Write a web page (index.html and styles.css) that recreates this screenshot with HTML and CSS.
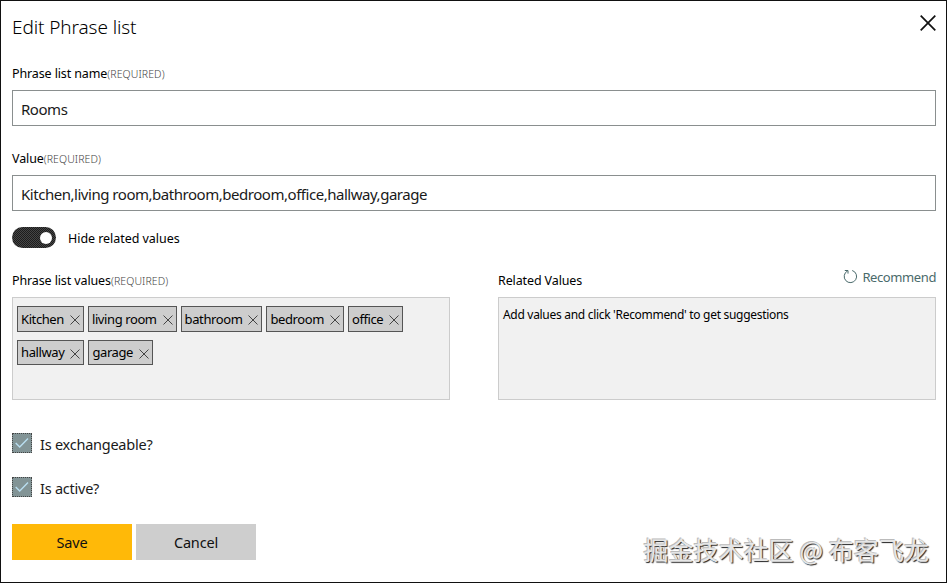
FILE: index.html
```html
<!DOCTYPE html>
<html lang="en">
    <head>
        <meta charset="UTF-8">
        <meta name="viewport" content="width=device-width, initial-scale=1.0">
        <title>Edit Phrase list</title>
        <link rel="stylesheet" href="styles.css">
    </head>
    <body>
        <svg class="sprite">
            <symbol id="cross" viewBox="0 0 10 10">
                <path d="M0.5 0.5 L9.5 9.5 M9.5 0.5 L0.5 9.5"/>
            </symbol>
        </svg>
        <form class="dialog">
            <div class="header">
                <h1 class="title">Edit Phrase list</h1>
                <svg class="close" width="16" height="16" viewBox="0 0 16 16">
                    <path d="M0.7 0.7 L15.3 15.3 M15.3 0.7 L0.7 15.3"/>
                </svg>
            </div>

            <label class="label nameLabel">Phrase list name<span class="required">(REQUIRED)</span></label>
            <input class="textBox" type="text" value="Rooms">

            <label class="label valueLabel">Value<span class="required">(REQUIRED)</span></label>
            <input class="textBox" type="text" value="Kitchen,living room,bathroom,bedroom,office,hallway,garage">

            <div class="toggleRow">
                <span class="toggle"><span class="knob"></span></span>
                <span class="label toggleLabel">Hide related values</span>
            </div>

            <div class="columns">
                <div class="column">
                    <div class="columnHead">
                        <label class="label">Phrase list values<span class="required">(REQUIRED)</span></label>
                    </div>
                    <div class="box chips">
                        <span class="chip">Kitchen<svg class="remove"><use href="#cross"/></svg></span>
                        <span class="chip">living room<svg class="remove"><use href="#cross"/></svg></span>
                        <span class="chip">bathroom<svg class="remove"><use href="#cross"/></svg></span>
                        <span class="chip">bedroom<svg class="remove"><use href="#cross"/></svg></span>
                        <span class="chip">office<svg class="remove"><use href="#cross"/></svg></span>
                        <span class="chip">hallway<svg class="remove"><use href="#cross"/></svg></span>
                        <span class="chip">garage<svg class="remove"><use href="#cross"/></svg></span>
                    </div>
                </div>
                <div class="column">
                    <div class="columnHead">
                        <label class="label">Related Values</label>
                        <a class="recommend">
                            <svg width="15" height="15" viewBox="0 0 15 15">
                                <path d="M9.2 1.5 A6.2 6.2 0 1 1 4.6 1.9 M1.8 1.5 H5 V4.6"/>
                            </svg>
                            <span>Recommend</span>
                        </a>
                    </div>
                    <div class="box hint">Add values and click 'Recommend' to get suggestions</div>
                </div>
            </div>

            <div class="checkRow">
                <span class="check"><svg width="14" height="12" viewBox="0 0 14 12"><path d="M0.7 6 L4.7 10 L13 1.5"/></svg></span>
                <span>Is exchangeable?</span>
            </div>
            <div class="checkRow">
                <span class="check"><svg width="14" height="12" viewBox="0 0 14 12"><path d="M0.7 6 L4.7 10 L13 1.5"/></svg></span>
                <span>Is active?</span>
            </div>

            <div class="buttons">
                <button class="btn save" type="button">Save</button>
                <button class="btn" type="button">Cancel</button>
            </div>
            <div class="watermark">掘金技术社区 @ 布客飞龙</div>
        </form>
    </body>
</html>
```
FILE: styles.css
```css
* {
    box-sizing: border-box;
}
body {
    margin: 0;
    font-family: "Noto Sans", "Open Sans", sans-serif;
    font-size: 14px;
    color: #1a1a1a;
    background-color: #fff;
}
svg {
    fill: none;
    flex: none;
}
.sprite {
    display: none;
}
.dialog {
    position: relative;
    width: 947px;
    height: 583px;
    border: 1px solid #111;
    padding: 0 10px 0 11px;
    overflow: hidden;
}
.header {
    display: flex;
    justify-content: space-between;
    height: 63px;
}
.title {
    margin: 13px 0 0;
    font-size: 19px;
    line-height: 26px;
    font-weight: 300;
    letter-spacing: -0.1px;
    color: #000;
}
.close {
    margin: 14px 0 0;
    stroke: #111;
    stroke-width: 1.7;
}
.label {
    display: block;
    font-size: 12.5px;
    line-height: 20px;
    letter-spacing: -0.12px;
    white-space: nowrap;
    color: #000;
}
.required {
    font-size: 10.5px;
    font-weight: 300;
    letter-spacing: 0.1px;
    color: #444;
}
.nameLabel {
    height: 26px;
}
.valueLabel {
    margin-top: 23px;
    height: 26px;
}
.textBox {
    display: block;
    width: 100%;
    height: 36px;
    border: 1px solid #8a8f8f;
    padding: 2px 8px 0;
    font-family: inherit;
    font-size: 15px;
    letter-spacing: -0.47px;
    color: #1a1a1a;
    background-color: #fff;
}
.toggleRow {
    display: flex;
    gap: 12px;
    margin-top: 16px;
    height: 21px;
}
.toggle {
    display: flex;
    justify-content: flex-end;
    align-items: center;
    width: 44px;
    height: 21px;
    padding-right: 4px;
    border-radius: 11px;
    background: repeating-conic-gradient(#1c1c1c 0 25%, #454545 0 50%) 0 0 / 2px 2px;
}
.knob {
    width: 12px;
    height: 12px;
    border-radius: 50%;
    background-color: #fff;
}
.toggleLabel {
    line-height: 24px;
    letter-spacing: -0.05px;
}
.columns {
    display: grid;
    grid-template-columns: 438px 438px;
    gap: 48px;
    margin-top: 17px;
}
.columnHead {
    display: flex;
    justify-content: space-between;
    height: 32px;
    padding-top: 6px;
}
.box {
    height: 103px;
    border: 1px solid #ccc;
    background-color: #f1f1f1;
}
.chips {
    display: flex;
    flex-wrap: wrap;
    align-content: flex-start;
    gap: 8px 4px;
    padding: 8px 4px;
}
.chip {
    display: flex;
    align-items: center;
    height: 25.5px;
    border: 1px solid #555;
    padding: 0 3px;
    font-size: 13px;
    letter-spacing: -0.4px;
    color: #000;
    background-color: #cdcdcd;
}
.remove {
    width: 10px;
    height: 10px;
    margin: 3px 0 0 6px;
    stroke: #444;
}
.hint {
    padding: 7px 4px;
    font-size: 12px;
    line-height: 20px;
    letter-spacing: -0.3px;
    color: #000;
}
.recommend {
    display: flex;
    gap: 4px;
    margin-top: -4px;
    font-size: 13px;
    line-height: 21px;
    letter-spacing: -0.4px;
    color: #4a6a6b;
}
.recommend svg {
    margin-top: 2px;
    stroke: #4a6a6b;
}
.checkRow {
    display: flex;
    gap: 8px;
    height: 20px;
    margin-top: 24px;
    font-size: 14.5px;
    line-height: 23px;
    letter-spacing: -0.24px;
}
.columns + .checkRow {
    margin-top: 33px;
}
.check {
    display: flex;
    align-items: center;
    justify-content: center;
    width: 20px;
    height: 20px;
    border: 1px dotted #444;
    background-color: #829496;
}
.check svg {
    stroke: #b9def0;
    stroke-width: 1.4;
}
.buttons {
    display: flex;
    gap: 4px;
    margin-top: 27px;
}
.btn {
    width: 120px;
    height: 36px;
    border: 0;
    padding: 0;
    font-family: inherit;
    font-size: 14.5px;
    letter-spacing: -0.15px;
    color: #111;
    background-color: #cecece;
}
.save {
    background-color: #ffb908;
}
/* sits over the bottom right corner of the dialog */
.watermark {
    position: absolute;
    right: 17px;
    bottom: 15px;
    font-family: "Noto Sans CJK SC", sans-serif;
    font-size: 25px;
    line-height: 36px;
    letter-spacing: 0.05px;
    white-space: nowrap;
    color: #e6e6e6;
    text-shadow: -1px -1px 0 #bbb, 1px 1px 1px #222;
}
```
